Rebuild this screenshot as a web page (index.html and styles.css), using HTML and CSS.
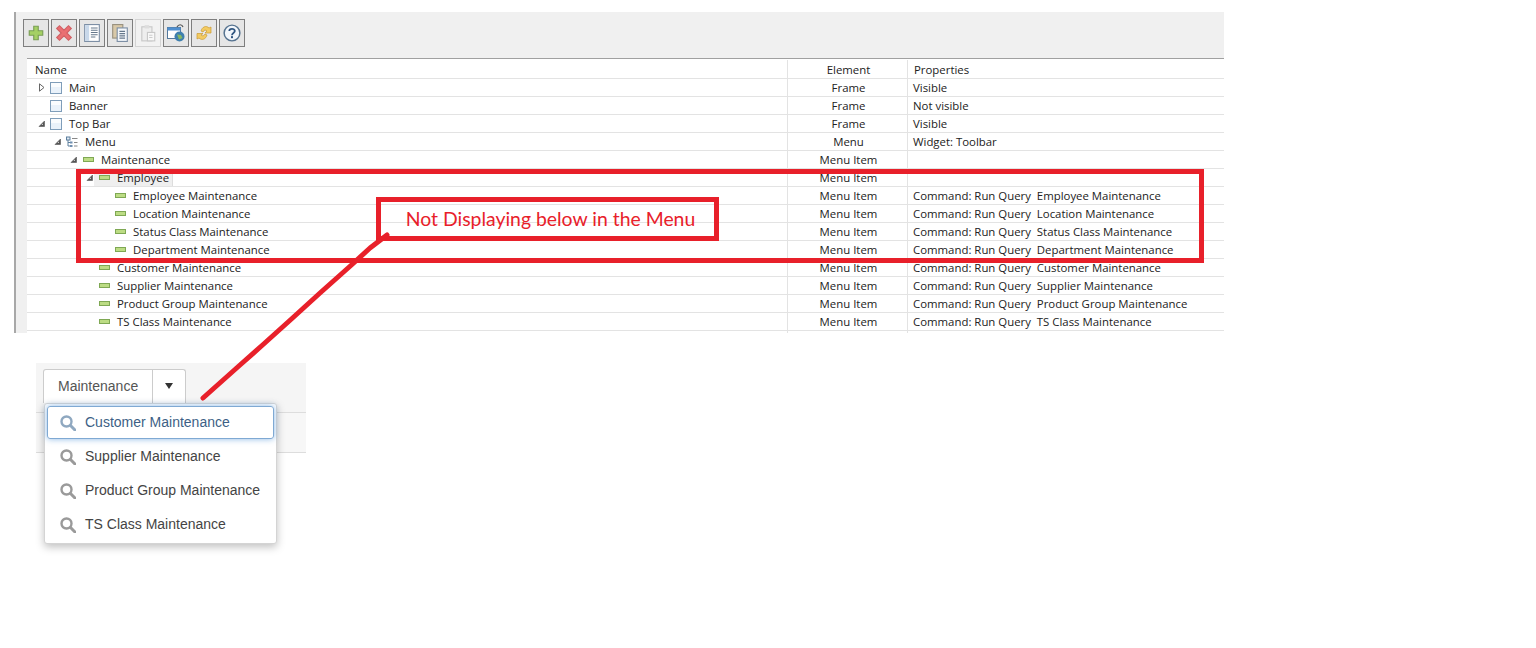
FILE: index.html
```html
<!DOCTYPE html>
<html lang="en">
<head>
    <meta charset="UTF-8">
    <meta name="viewport" content="width=device-width, initial-scale=1.0">
    <title>Menu Maintenance</title>
    <link rel="stylesheet" href="styles.css">
</head>
<body>
    <svg width="0" height="0" class="defs">
        <symbol id="i-check" viewBox="0 0 12 12"><rect x=".5" y=".5" width="11" height="11" fill="#eaf2fa" stroke="#7f9db9"/><rect x="1" y="1" width="10" height="4" fill="#fafcfe"/></symbol>
        <symbol id="i-item" viewBox="0 0 11 5"><rect x=".5" y=".5" width="10" height="4" fill="#bcdc84" stroke="#7fa854"/></symbol>
        <symbol id="i-open" viewBox="0 0 7 7"><path d="M6.500 1v5.500H1z" fill="#555" stroke="#555" stroke-width=".6"/><path d="M5 3.500v1.500H3.500z" fill="#ddd"/></symbol>
        <symbol id="i-closed" viewBox="0 0 7 9"><path d="M1.500 .8L6 4.500 1.500 8.200z" fill="#fff" stroke="#666"/></symbol>
        <symbol id="i-search" viewBox="0 0 16 16"><circle cx="6.500" cy="6.500" r="5" fill="none" stroke="currentColor" stroke-width="2.400"/><path d="M10.500 10.500L15 15" stroke="currentColor" stroke-width="3" stroke-linecap="round"/></symbol>
    </svg>

    <div class="editor">
        <div class="toolbar">
            <button class="tool">
                <svg viewBox="0 0 16 16"><path d="M6 2h4v4h4v4h-4v4H6v-4H2V6h4z" fill="#a5d064" stroke="#7a9e55"/></svg>
            </button>
            <button class="tool">
                <svg viewBox="0 0 16 16"><path d="M1.500 4L4 1.500l4 4 4-4L14.500 4l-4 4 4 4-2.500 2.500-4-4-4 4L1.500 12l4-4z" fill="#ea6f72" stroke="#d06165"/></svg>
            </button>
            <button class="tool">
                <svg viewBox="0 0 16 16"><rect x="1.500" y=".5" width="13" height="15" fill="#fff" stroke="#7d8fa5"/><rect x="2" y="1" width="3.500" height="14" fill="#c8d8ea"/><path d="M7 3.500h6M7 5.500h6M7 7.500h6M7 9.500h6M7 11.500h4" stroke="#66788c"/></svg>
            </button>
            <button class="tool">
                <svg viewBox="0 0 16 16"><rect x="1.500" y=".5" width="9" height="12" fill="#d9c9a8" stroke="#99917f"/><rect x="5.500" y="3.500" width="9" height="12" fill="#f4f7fb" stroke="#7d8fa5"/><path d="M7.500 6.500h5M7.500 8.500h5M7.500 10.500h5M7.500 12.500h5" stroke="#66788c"/></svg>
            </button>
            <button class="tool disabled">
                <svg viewBox="0 0 16 16"><rect x="2.500" y="2.500" width="9" height="12.500" fill="#eee" stroke="#c8c8c8"/><rect x="5" y="1" width="4" height="3" fill="#ddd"/><rect x="7.500" y="7.500" width="6.500" height="7.500" fill="#f8f8f8" stroke="#c8c8c8"/><path d="M9 10h3M9 12h3" stroke="#ccc"/></svg>
            </button>
            <button class="tool">
                <svg viewBox="0 0 18 18"><rect x=".5" y="3.500" width="13" height="11" fill="#fff" stroke="#54789c"/><rect x=".5" y="3.500" width="13" height="3" fill="#4f8fd0"/><path d="M10 3c1.500-3 5-3 6 0" fill="none" stroke="#555" stroke-width="1.200"/><circle cx="12.500" cy="12.500" r="5" fill="#3f7fae"/><path d="M10 10.500l4 .5 1.500 3-3.500 1.500z" fill="#86b864"/></svg>
            </button>
            <button class="tool">
                <svg viewBox="0 0 18 18"><path d="M6 7c1-4 5-6 8-3l2-1v6h-6l2-2c-1.500-1.500-3-1-4 1z" fill="#f3cb62" stroke="#c99a34" stroke-width=".7"/><path d="M12 11c-1 4-5 6-8 3l-2 1V9.500h6L6 11c1.500 1.500 3 1 4-1z" fill="#f3cb62" stroke="#c99a34" stroke-width=".7"/></svg>
            </button>
            <button class="tool">
                <svg viewBox="0 0 16 16"><circle cx="8" cy="8" r="7" fill="#f2f6fb" stroke="#55728f" stroke-width="1.300"/><path d="M5.600 6.300C5.600 3.600 10.500 3.600 10.500 6.300 10.500 8 8 8 8 9.900" fill="none" stroke="#2f5580" stroke-width="1.600"/><rect x="7.100" y="10.800" width="1.800" height="1.800" fill="#2f5580"/></svg>
            </button>
        </div>

        <div class="tree-table">
            <div class="row head">
                <div class="cell name-head">Name</div>
                <div class="cell element">Element</div>
                <div class="cell props-head">Properties</div>
            </div>
            <div class="row">
                <div class="cell name lvl-0"><span class="arrow"><svg class="closed"><use href="#i-closed"/></svg></span><svg class="icon check"><use href="#i-check"/></svg>Main</div>
                <div class="cell element">Frame</div>
                <div class="cell props">Visible</div>
            </div>
            <div class="row">
                <div class="cell name lvl-0"><span class="arrow"></span><svg class="icon check"><use href="#i-check"/></svg>Banner</div>
                <div class="cell element">Frame</div>
                <div class="cell props">Not visible</div>
            </div>
            <div class="row">
                <div class="cell name lvl-0"><span class="arrow"><svg class="open"><use href="#i-open"/></svg></span><svg class="icon check"><use href="#i-check"/></svg>Top Bar</div>
                <div class="cell element">Frame</div>
                <div class="cell props">Visible</div>
            </div>
            <div class="row">
                <div class="cell name lvl-1"><span class="arrow"><svg class="open"><use href="#i-open"/></svg></span>
                    <svg class="icon" viewBox="0 0 12 12"><rect x=".5" y="1" width="3.500" height="3" fill="#dfe8f2" stroke="#5c7f9d"/><path d="M2 4v6h2M2 6.500h2" fill="none" stroke="#5c7f9d"/><rect x="4" y="5.500" width="2.500" height="2" fill="#6f8fb0"/><rect x="4" y="9" width="2.500" height="2" fill="#6f8fb0"/><path d="M6 2.500h5.500M8 6.500h3.500M8 10h3.500" stroke="#888"/></svg>Menu</div>
                <div class="cell element">Menu</div>
                <div class="cell props">Widget: Toolbar</div>
            </div>
            <div class="row">
                <div class="cell name lvl-2"><span class="arrow"><svg class="open"><use href="#i-open"/></svg></span><svg class="icon item"><use href="#i-item"/></svg>Maintenance</div>
                <div class="cell element">Menu Item</div>
                <div class="cell props"></div>
            </div>
            <div class="row">
                <div class="cell name lvl-3"><span class="arrow"><svg class="open"><use href="#i-open"/></svg></span><span class="selected"><svg class="icon item"><use href="#i-item"/></svg>Employee</span></div>
                <div class="cell element">Menu Item</div>
                <div class="cell props"></div>
            </div>
            <div class="row">
                <div class="cell name lvl-4"><span class="arrow"></span><svg class="icon item"><use href="#i-item"/></svg>Employee Maintenance</div>
                <div class="cell element">Menu Item</div>
                <div class="cell props">Command: Run Query&nbsp; Employee Maintenance</div>
            </div>
            <div class="row">
                <div class="cell name lvl-4"><span class="arrow"></span><svg class="icon item"><use href="#i-item"/></svg>Location Maintenance</div>
                <div class="cell element">Menu Item</div>
                <div class="cell props">Command: Run Query&nbsp; Location Maintenance</div>
            </div>
            <div class="row">
                <div class="cell name lvl-4"><span class="arrow"></span><svg class="icon item"><use href="#i-item"/></svg>Status Class Maintenance</div>
                <div class="cell element">Menu Item</div>
                <div class="cell props">Command: Run Query&nbsp; Status Class Maintenance</div>
            </div>
            <div class="row">
                <div class="cell name lvl-4"><span class="arrow"></span><svg class="icon item"><use href="#i-item"/></svg>Department Maintenance</div>
                <div class="cell element">Menu Item</div>
                <div class="cell props">Command: Run Query&nbsp; Department Maintenance</div>
            </div>
            <div class="row">
                <div class="cell name lvl-3"><span class="arrow"></span><svg class="icon item"><use href="#i-item"/></svg>Customer Maintenance</div>
                <div class="cell element">Menu Item</div>
                <div class="cell props">Command: Run Query&nbsp; Customer Maintenance</div>
            </div>
            <div class="row">
                <div class="cell name lvl-3"><span class="arrow"></span><svg class="icon item"><use href="#i-item"/></svg>Supplier Maintenance</div>
                <div class="cell element">Menu Item</div>
                <div class="cell props">Command: Run Query&nbsp; Supplier Maintenance</div>
            </div>
            <div class="row">
                <div class="cell name lvl-3"><span class="arrow"></span><svg class="icon item"><use href="#i-item"/></svg>Product Group Maintenance</div>
                <div class="cell element">Menu Item</div>
                <div class="cell props">Command: Run Query&nbsp; Product Group Maintenance</div>
            </div>
            <div class="row">
                <div class="cell name lvl-3"><span class="arrow"></span><svg class="icon item"><use href="#i-item"/></svg>TS Class Maintenance</div>
                <div class="cell element">Menu Item</div>
                <div class="cell props">Command: Run Query&nbsp; TS Class Maintenance</div>
            </div>
            <div class="row stub">
                <div class="cell name"></div>
                <div class="cell element"></div>
                <div class="cell props"></div>
            </div>
        </div>
    </div>

    <div class="menu-demo">
        <div class="demo-bar">
            <div class="split-btn">
                <span class="split-label">Maintenance</span>
                <span class="split-caret"></span>
            </div>
        </div>
        <div class="demo-strip"></div>
        <ul class="dropdown">
            <li class="focused"><svg class="search"><use href="#i-search"/></svg>Customer Maintenance</li>
            <li><svg class="search"><use href="#i-search"/></svg>Supplier Maintenance</li>
            <li><svg class="search"><use href="#i-search"/></svg>Product Group Maintenance</li>
            <li><svg class="search"><use href="#i-search"/></svg>TS Class Maintenance</li>
        </ul>
    </div>

    <!-- red annotations drawn over the screenshot -->
    <div class="mark-big"></div>
    <div class="mark-note">Not Displaying below in the Menu</div>
    <svg class="mark-line" width="400" height="420">
        <path d="M203 398L240 365 262 345.500 292 318.500 320 293 352 264.500 370 248 387 235" fill="none" stroke="#e8202a" stroke-width="5" stroke-linecap="round" stroke-linejoin="round"/>
    </svg>
</body>
</html>
```

FILE: styles.css
```css
body {
    box-sizing: border-box;
    height: 648px;
    margin: 0;
    padding-top: 12px;
    background-color: #fff;
    font-family: "Open Sans", Arial, sans-serif;
    color: #222;
    overflow: hidden;
}

.defs {
    position: absolute;
}

.editor {
    width: 1208px;
    height: 321px;
    margin-left: 14px;
    border-left: 2px solid #a8a8a8;
    background-color: #f0f0f0;
    overflow: hidden;
}

.toolbar {
    display: flex;
    gap: 2px;
    height: 28px;
    padding: 7px 0 11px 7px;
}

.tool {
    display: flex;
    align-items: center;
    justify-content: center;
    width: 26px;
    height: 28px;
    padding: 0;
    border: 1px solid #7e7e7e;
    background-color: #e6e6e6;
}

.tool svg {
    width: 18px;
    height: 18px;
}

.tool.disabled {
    border-color: #d4d4d4;
    background-color: #f2f2f2;
}

.tree-table {
    margin-left: 11px;
    border-top: 1px solid #a0a0a0;
    background-color: #fff;
    font-size: 11.400px;
}

.row {
    display: grid;
    grid-template-columns: 761px 120px 1fr;
    height: 18px;
    box-sizing: border-box;
    border-bottom: 1px solid #e3e3e3;
}

.row.head {
    height: 20px;
    padding-top: 1px;
}

.row.stub {
    border-bottom: none;
}

.cell {
    display: flex;
    align-items: center;
    white-space: nowrap;
    line-height: 17px;
}

.name,
.name-head {
    border-right: 1px solid #e3e3e3;
}

.name-head {
    padding-left: 8px;
}

.element {
    justify-content: center;
    padding-left: 2px;
    border-right: 1px solid #e3e3e3;
}

.props {
    padding-left: 5px;
}

.props-head {
    padding-left: 6px;
}

.lvl-0 { padding-left: 10px; }
.lvl-1 { padding-left: 26px; }
.lvl-2 { padding-left: 42px; }
.lvl-3 { padding-left: 58px; }
.lvl-4 { padding-left: 74px; }

.arrow {
    display: flex;
    align-items: center;
    justify-content: flex-end;
    flex: none;
    width: 8px;
    height: 17px;
    padding-right: 5px;
}

.arrow .open {
    width: 7px;
    height: 7px;
}

.arrow .closed {
    width: 7px;
    height: 9px;
}

.icon {
    flex: none;
    width: 12px;
    height: 12px;
    margin-right: 7px;
}

.icon.item {
    width: 11px;
    height: 5px;
    margin-left: 1px;
    margin-right: 7px;
}

.selected {
    display: flex;
    align-items: center;
    height: 16px;
    margin-left: -4px;
    padding: 0 3px 0 4px;
    background-color: #efefef;
    border-right: 1px solid #ddd;
}

.menu-demo {
    position: relative;
    width: 270px;
    margin: 30px 0 0 36px;
    font-family: "Liberation Sans", Arial, sans-serif;
    font-size: 14px;
}

.demo-bar {
    height: 50px;
    box-sizing: border-box;
    padding: 6px 0 0 7px;
    background-color: #f5f5f5;
    border-bottom: 1px solid #ddd;
}

.demo-strip {
    height: 39px;
    background-color: #f7f7f7;
    border-bottom: 1px solid #ddd;
}

.split-btn {
    display: flex;
    width: 143px;
    height: 34px;
    box-sizing: border-box;
    border: 1px solid #ccc;
    border-bottom: none;
    border-radius: 3px 3px 0 0;
    background-color: #fff;
    color: #555;
}

.split-label {
    width: 109px;
    padding-left: 14px;
    box-sizing: border-box;
    line-height: 33px;
    border-right: 1px solid #ccc;
}

.split-caret {
    width: 0;
    height: 0;
    margin: 13px 0 0 12px;
    border-top: 6px solid #333;
    border-left: 4px solid transparent;
    border-right: 4px solid transparent;
}

.dropdown {
    position: absolute;
    top: 40px;
    left: 8px;
    width: 233px;
    box-sizing: border-box;
    margin: 0;
    padding: 2px;
    list-style: none;
    background-color: #fff;
    border: 1px solid #d4d4d4;
    border-radius: 3px;
    box-shadow: 0 3px 8px rgba(0, 0, 0, 0.25);
    color: #444;
}

.dropdown li {
    display: flex;
    align-items: center;
    height: 33px;
    box-sizing: border-box;
    margin-bottom: 1px;
    padding: 0 0 2px 12px;
    border: 1px solid transparent;
    border-radius: 3px;
}

.dropdown li:last-child {
    margin-bottom: 0;
}

.dropdown li.focused {
    border-color: #7fa9d3;
    box-shadow: 0 0 6px rgba(102, 160, 220, 0.75);
    color: #3d5f85;
}

.search {
    flex: none;
    width: 16px;
    height: 16px;
    margin: 2px 9px 0 0;
    color: #9a9a9a;
}

.focused .search {
    color: #8fa8c0;
}

.mark-big {
    position: absolute;
    top: 169px;
    left: 76px;
    width: 1118px;
    height: 84px;
    border: 5px solid #e8202a;
}

.mark-note {
    position: absolute;
    top: 197px;
    left: 376px;
    box-sizing: border-box;
    width: 343px;
    height: 44px;
    padding-left: 6px;
    border: 5px solid #e8202a;
    font-family: "Lato", Arial, sans-serif;
    font-size: 19.400px;
    line-height: 34px;
    text-align: center;
    color: #e8202a;
}

.mark-line {
    position: absolute;
    top: 0;
    left: 0;
}
```
